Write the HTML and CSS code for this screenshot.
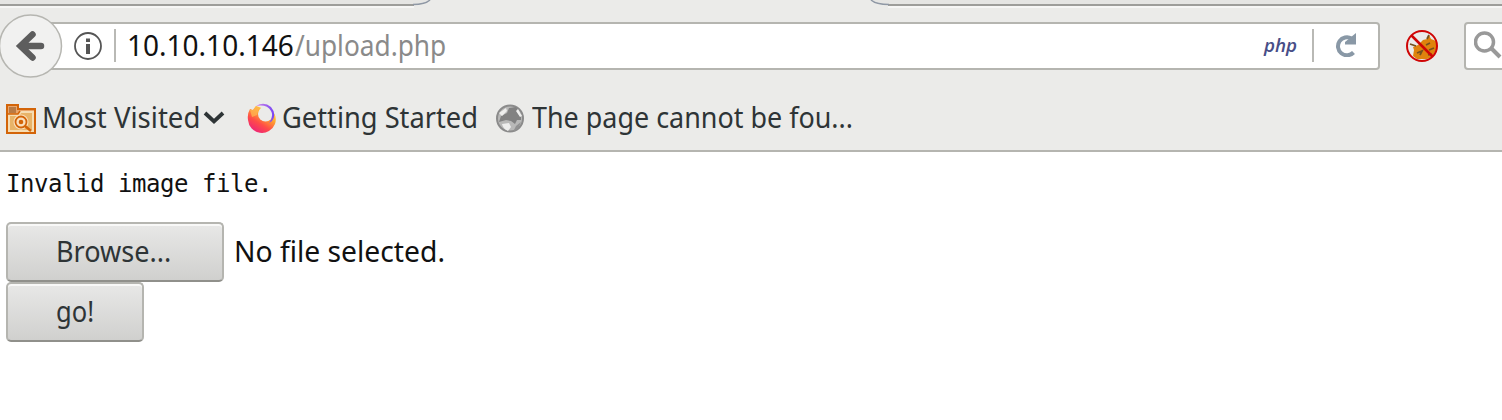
FILE: index.html
```html
<!DOCTYPE html>
<html lang="en">
<head>
<meta charset="utf-8">
<title>upload.php</title>
<link rel="stylesheet" href="styles.css">
</head>
<body>
<header class="chrome">
  <svg class="tab-edge" width="1502" height="9" viewBox="0 0 1502 9" fill="none">
    <path d="M0 0H431Q426 5 414 5H0ZM871 0H1502V5H888Q876 5 871 0Z" fill="#e5e5e3"/>
    <path d="M0 7H414M888 7H1502" stroke="#f6f6f5" stroke-width="2"/>
    <path d="M0 5H414M888 5H1502" stroke="#9d9d9a" stroke-width="2"/>
    <path d="M413 4.500Q425 4.500 430 0M889 4.500Q876 4.500 871 0" stroke="#8f98a5" stroke-width="1.500"/>
  </svg>
  <nav class="toolbar">
    <div class="back">
      <svg width="63" height="64" viewBox="0 0 63 64"><circle cx="30.500" cy="32" r="31" fill="#f1f1f0" stroke="#b6b6b1" stroke-width="1.500"/><path d="M32.500 20.500L20.500 32L32.500 43.500M21 32H41" fill="none" stroke="#5d5d5d" stroke-width="6.500" stroke-linecap="round"/></svg>
    </div>
    <div class="address">
      <svg class="info" width="28" height="28" viewBox="0 0 28 28"><circle cx="14" cy="14" r="13" fill="none" stroke="#555" stroke-width="1.800"/><path d="M14 6.500V10M14 12V22" stroke="#555" stroke-width="4"/></svg>
      <span class="divider"></span>
      <span class="url"><span class="label host">10.10.10.146</span><span class="label path">/upload.php</span></span>
      <span class="php">php</span>
      <span class="divider"></span>
      <svg class="reload" width="24" height="24" viewBox="0 0 24 24"><path d="M18.500 5.500A9 9 0 1 0 20.500 19.500" fill="none" stroke="#8998a6" stroke-width="4"/><path d="M23 0V11.500H12V9Z" fill="#8998a6"/></svg>
    </div>
    <svg class="blocked" width="34" height="34" viewBox="0 0 34 34">
      <path d="M8 18L13 16L18 11L22 10L24 6L26 10L31 12V21L27 28L22 30H12L8 27L9 21Z" fill="#df830d"/>
      <path d="M5 15L11 17M22 10L24 6M12 24L17 22L15 26M21 16L25 14M24 21L29 19M23 26L27 25" stroke="#74521f" stroke-width="1.800" fill="none"/>
      <circle cx="17" cy="17" r="15" fill="none" stroke="#cf0505" stroke-width="2"/><path d="M6.500 6.500L27.500 27.500" stroke="#cf0505" stroke-width="2.500"/>
    </svg>
    <div class="search"><svg width="30" height="30" viewBox="0 0 30 30"><circle cx="10.500" cy="11" r="9" fill="none" stroke="#999" stroke-width="3.500"/><path d="M17 17L26 26" stroke="#999" stroke-width="4"/></svg></div>
  </nav>
  <nav class="bookmarks">
    <svg class="folder" width="30" height="30" viewBox="0 0 30 30">
      <path d="M1 1H12V5H29V29H1Z" fill="#e9a56b" stroke="#d36408" stroke-width="2"/><path d="M3 3H10V9H3Z" fill="#b97a44"/>
      <path d="M3 11H12L15 8H27V27H3Z" fill="#e8b469" stroke="#f6ddb3" stroke-width="2"/><path d="M2 10H12L14 7" fill="none" stroke="#d36408" stroke-width="1.500"/>
      <circle cx="15" cy="18" r="7.500" fill="#f9dfbd"/><circle cx="15" cy="18" r="5.500" fill="none" stroke="#d36408" stroke-width="1.800"/><circle cx="15" cy="18" r="2.300" fill="#d36408"/><path d="M19 22L25 27" stroke="#d36408" stroke-width="2.500"/>
    </svg>
    <span class="label visited">Most Visited</span>
    <svg class="chevron" width="22" height="14" viewBox="0 0 22 14"><path d="M2 2L11 10.500L20 2" fill="none" stroke="#2e3436" stroke-width="3.800"/></svg>
    <svg class="firefox" width="30" height="32" viewBox="0 0 30 32">
      <defs><linearGradient id="flame" x1="1" y1="0" x2=".35" y2="1"><stop offset="0" stop-color="#fff36a"/><stop offset=".4" stop-color="#ffae2d"/><stop offset=".72" stop-color="#ff4c48"/><stop offset="1" stop-color="#ef2774"/></linearGradient><linearGradient id="ring"><stop stop-color="#d48be6"/><stop offset="1" stop-color="#7542f5"/></linearGradient></defs>
      <path d="M3 7L6 8L9 4L12 5L27 11Q30 16 28 22A14 14 0 0 1 1 18Q0 12 3 7Z" fill="url(#flame)"/>
      <path d="M3 8L6 8L9 4L12 6L10 13L5 15Z" fill="#ffb552" opacity=".75"/>
      <circle cx="18.500" cy="12" r="7.500" fill="#ebebe9"/><path d="M9 4Q17-1 24 5Q30 12 25 19L22 21Q27 14 24 9Q20 2 9 4Z" fill="url(#ring)"/>
    </svg>
    <span class="label started">Getting Started</span>
    <svg class="globe" width="28" height="29" viewBox="0 0 28 29"><circle cx="14" cy="14.500" r="13" fill="#b9b9b8" stroke="#8b8b8b" stroke-width="2"/><path d="M13 4L20 3L25 10L25 16L21 16L19 20L15 17L10 16L3 18L5 12L11 9Z" fill="#828282"/><path d="M20 22L25 18L22 25L17 28Z" fill="#929292"/><path d="M3 9L10 4L11 7L6 12ZM6 20L13 19L15 23L12 27Q7 25 6 20ZM22 5L26 12L24 13L20 7Z" fill="#eeeeed"/></svg>
    <span class="label missing">The page cannot be fou...</span>
  </nav>
</header>
<main>
  <pre class="message">Invalid image file.</pre>
  <form>
    <div class="file-row"><button class="browse" type="button"><span class="label browse-text">Browse...</span></button><span class="label none">No file selected.</span></div>
    <button class="go" type="button"><span class="label go-text">go!</span></button>
  </form>
</main>
</body>
</html>
```
FILE: styles.css
```css
* { box-sizing: border-box; }
body { margin: 0; height: 420px; overflow: hidden; background: #fff; color: #111; font: 29px/40px "Noto Sans", sans-serif; }
svg { display: block; flex: none; }
.chrome { height: 152px; overflow: hidden; background: #ebebe9; border-bottom: 2px solid #b5b5b0; }
.tab-edge { height: 9px; }
.toolbar { height: 74px; display: flex; align-items: center; }
.back { width: 63px; margin-right: -14px; z-index: 1; }
.address { width: 1331px; height: 48px; display: flex; align-items: center; flex: none; background: #fff; border: 2px solid #b5b5b0; border-left: 0; border-radius: 0 4px 4px 0; }
.info { margin: 0 12px 0 25px; }
.divider { width: 2px; height: 33px; margin-bottom: 1px; background: #b9b9b5; }
.url { flex: 1; display: flex; margin: 0 0 3px 11px; }
.label { display: block; flex: none; white-space: pre; transform-origin: left center; }
.host { width: 168px; color: #111; transform: scaleX(.966); }
.path { color: #8a8a8a; transform: scaleX(.905); }
.php { width: 48px; margin-bottom: 2px; font: italic 600 18px/30px "Open Sans", sans-serif; color: #484e87; transform: scaleX(1.04); transform-origin: left center; }
.reload { margin: 0 21px 2px 19px; }
.blocked { margin-left: 25px; }
.search { width: 60px; height: 48px; flex: none; margin-left: 25px; padding: 7px 8px; border: 2px solid #b5b5b0; border-radius: 4px; background: #fff; }
.bookmarks { height: 67px; padding: 4px 0 0 6px; display: flex; align-items: center; color: #2e3436; }
.bookmarks .label { margin-bottom: 4px; }
.bookmarks .visited { width: 161px; margin-left: 6px; transform: scaleX(.95); }
.chevron { margin-bottom: 1px; }
.firefox { margin-left: 22px; margin-bottom: 2px; }
.bookmarks .started { width: 207px; margin-left: 5px; transform: scaleX(.94); }
.globe { margin-left: 7px; margin-bottom: 1px; }
.bookmarks .missing { margin-left: 8px; transform: scaleX(.928); }
main { padding: 12px 6px; }
.message { height: 40px; margin: 0 0 18px; font: 24px/40px "DejaVu Sans Mono", monospace; letter-spacing: -.45px; }
.file-row { display: flex; align-items: center; height: 60px; }
button { display: block; height: 60px; padding: 0 0 3px 48px; border: 2px solid #b5b5b0; border-bottom-color: #90908b; border-radius: 5px; background: linear-gradient(#e8e8e7, #d0d0ce); box-shadow: inset 0 2px #f8f8f7; color: #2e3436; font: inherit; text-align: left; }
.browse { width: 218px; }
.browse-text { transform: scaleX(.933); }
.none { margin: 0 0 3px 10px; transform: scaleX(.975); }
.go { width: 138px; }
.go-text { transform: scaleX(.88); }
```
